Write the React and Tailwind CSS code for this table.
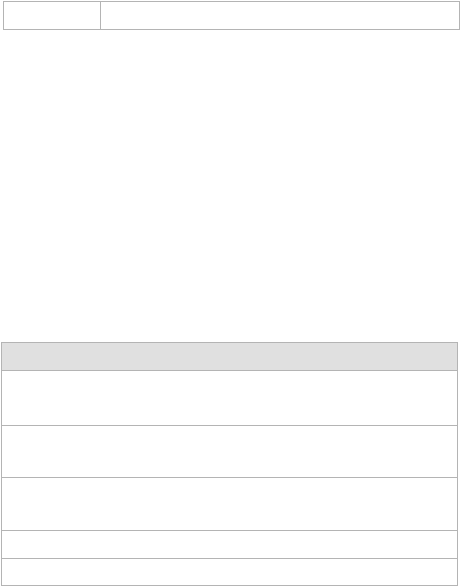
import React from 'react';

const rows = [54, 51, 52, 27, 26];

const App = () => {
  return (
    <div className="w-[460px] h-[586px] bg-white relative font-['Liberation_Sans',sans-serif]">
      <div className="pt-px pl-[3px]">
        <div className="w-[457px] h-[29px] border border-[#b4b4b4] flex">
          <div className="w-[97px] border-r border-[#b4b4b4]"></div>
          <div className="flex-1"></div>
        </div>
      </div>

      <div className="pt-[312px] pl-px">
        <div className="w-[457px] border border-[#b4b4b4]">
          <div className="h-[28px] bg-[#e0e0e0] border-b border-[#b4b4b4]"></div>
          {rows.map((h, i) => (
            <div
              key={i}
              style={{ height: h + (i < rows.length - 1 ? 1 : 0) }}
              className={i < rows.length - 1 ? 'border-b border-[#b4b4b4]' : ''}
            ></div>
          ))}
        </div>
      </div>
    </div>
  );
};

export default App;
